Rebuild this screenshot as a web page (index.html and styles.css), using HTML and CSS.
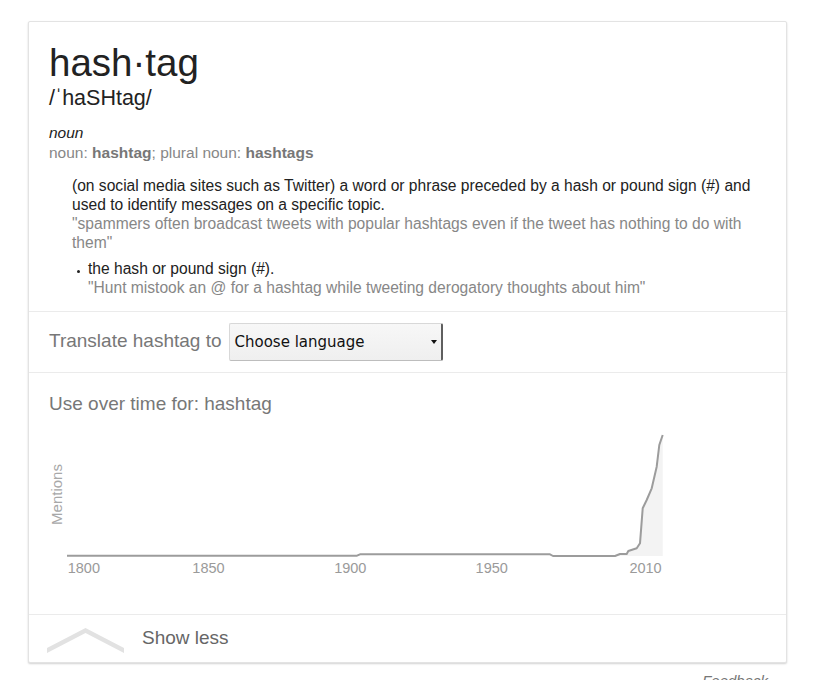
FILE: index.html
```html
<!DOCTYPE html>
<html>
<head>
<meta charset="utf-8">
<link rel="stylesheet" href="styles.css">
</head>
<body>
<div class="card">
  <section class="dict">
    <div class="word">hash·tag</div>
    <div class="phon">/ˈhaSHtag/</div>
    <div class="pos">noun</div>
    <div class="forms">noun: <b>hashtag</b>; plural noun: <b>hashtags</b></div>
    <div class="sense">
      <div class="def">(on social media sites such as Twitter) a word or phrase preceded by a hash or pound sign (#) and used to identify messages on a specific topic.</div>
      <div class="ex">"spammers often broadcast tweets with popular hashtags even if the tweet has nothing to do with them"</div>
      <ul class="subs">
        <li>
          <div class="def">the hash or pound sign (#).</div>
          <div class="ex">"Hunt mistook an @ for a hashtag while tweeting derogatory thoughts about him"</div>
        </li>
      </ul>
    </div>
  </section>
  <section class="translate">
    <span class="label">Translate hashtag to</span>
    <div class="select"><span>Choose language</span><i class="arrow"></i></div>
  </section>
  <section class="usage">
    <div class="label">Use over time for: hashtag</div>
    <svg class="chart" width="620" height="199" viewBox="0 0 620 199">
      <text class="ylab" transform="translate(13,79.5) rotate(-90)" text-anchor="middle">Mentions</text>
      <polygon class="area" points="566,141 571,139 577.7,139 579.3,136 587.7,133.3 591,128.3 593.7,93.3 597.7,85 602.7,73.3 607.7,51.7 610.3,30 613.7,20 613.7,141"/>
      <polyline class="line" points="18,140.7 308,140.7 311,139.3 501,139.3 504,141 566,141 571,139 577.7,139 579.3,136 587.7,133.3 591,128.3 593.7,93.3 597.7,85 602.7,73.3 607.7,51.7 610.3,30 613.7,20"/>
      <text class="xlab" x="18.7" y="158.3" text-anchor="start">1800</text>
      <text class="xlab" x="159.5" y="158.3" text-anchor="middle">1850</text>
      <text class="xlab" x="301.3" y="158.3" text-anchor="middle">1900</text>
      <text class="xlab" x="442.7" y="158.3" text-anchor="middle">1950</text>
      <text class="xlab" x="612.7" y="158.3" text-anchor="end">2010</text>
    </svg>
  </section>
  <section class="toggle">
    <svg class="chev" width="78" height="26" viewBox="0 0 78 26">
      <polygon points="0,20 38.5,0 77,20 77,25 38.5,5 0,25"/>
    </svg>
    <span class="label">Show less</span>
  </section>
</div>
<div class="feedback">Feedback</div>
</body>
</html>
```

FILE: styles.css
```css
html, body {
  margin: 0;
  padding: 0;
  height: 680px;
  overflow: hidden;
  background: #fff;
}
body {
  font-family: "Liberation Sans", Arial, Helvetica, sans-serif;
  color: #222;
}
.card {
  margin: 21px 0 0 28px;
  width: 757px;
  border: 1px solid #e3e3e3;
  border-radius: 2px;
  box-shadow: 0 1px 2px rgba(0, 0, 0, 0.18);
  background: #fff;
}
.dict {
  padding: 19px 20px 14px 20px;
}
.word {
  font-size: 38.5px;
  line-height: 44px;
  color: #222;
}
.phon {
  font-size: 21.5px;
  line-height: 27px;
  color: #222;
}
.pos {
  margin-top: 11px;
  font-size: 15.5px;
  line-height: 20px;
  font-style: italic;
  color: #222;
}
.forms {
  font-size: 15.5px;
  line-height: 20px;
  color: #878787;
}
.forms b {
  color: #777;
}
.sense {
  margin: 13px 0 0 23px;
  font-size: 15.6px;
  line-height: 19px;
}
.def {
  color: #222;
}
.ex {
  color: #878787;
}
.subs {
  list-style: none;
  margin: 7px 0 0 0;
  padding: 0;
}
.subs li {
  position: relative;
  padding-left: 16px;
}
.subs li::before {
  content: "";
  position: absolute;
  left: 5px;
  top: 11px;
  width: 3px;
  height: 3px;
  border-radius: 50%;
  background: #222;
}
.translate {
  border-top: 1px solid #ebebeb;
  padding: 11px 20px;
  display: flex;
  align-items: center;
}
.label {
  font-size: 19px;
  line-height: 22px;
  color: #777;
}
.translate .label {
  margin-bottom: 2px;
}
.select {
  margin-left: 7px;
  width: 206px;
  height: 36px;
  box-sizing: content-box;
  border: 1px solid #d8d8d8;
  border-right: 2px solid #5f5f5f;
  border-bottom-color: #bdbdbd;
  border-radius: 2px;
  background: linear-gradient(#f7f7f7, #efefef);
  display: flex;
  align-items: center;
  justify-content: space-between;
  padding-left: 5px;
  font-family: "DejaVu Sans", "Lucida Grande", sans-serif;
  font-size: 15px;
  color: #111;
}
.arrow {
  width: 0;
  height: 0;
  margin-right: 4px;
  border-left: 3px solid transparent;
  border-right: 3px solid transparent;
  border-top: 4px solid #111;
}
.usage {
  border-top: 1px solid #ebebeb;
  padding: 20px 20px 0 20px;
}
.chart {
  display: block;
}
.chart .ylab {
  font-family: "Liberation Sans", Arial, sans-serif;
  font-size: 15px;
  fill: #a8a8a8;
}
.chart .xlab {
  font-family: "Liberation Sans", Arial, sans-serif;
  font-size: 14.5px;
  fill: #9a9a9a;
}
.chart .line {
  fill: none;
  stroke: #9c9c9c;
  stroke-width: 2;
  stroke-linejoin: round;
}
.chart .area {
  fill: #f3f3f3;
}
.toggle {
  border-top: 1px solid #ebebeb;
  height: 47px;
  display: flex;
  align-items: flex-start;
}
.chev {
  display: block;
  margin: 13px 0 0 18px;
}
.chev polygon {
  fill: #e2e2e2;
}
.toggle .label {
  margin: 12px 0 0 17px;
  color: #666;
}
.feedback {
  width: 740px;
  margin: 9px 0 0 28px;
  text-align: right;
  font-style: italic;
  font-size: 15px;
  line-height: 18px;
  color: #777;
}
```
